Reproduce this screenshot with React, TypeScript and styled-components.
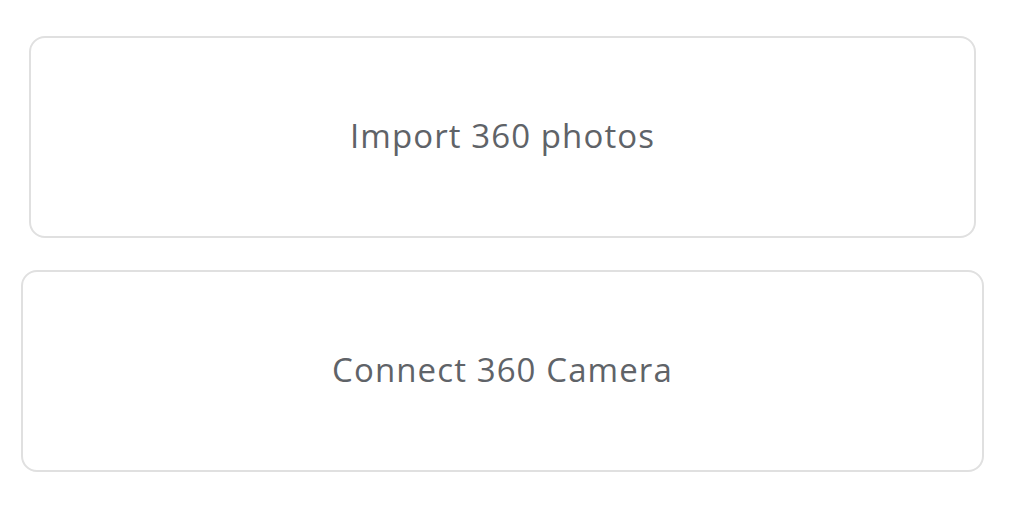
import React from "react";
import styled, { createGlobalStyle } from "styled-components";

const GlobalStyle = createGlobalStyle`
    html, body {
        margin: 0;
        padding: 0;
        background: #ffffff;
    }
`;

const Page = styled.div`
    width: 1024px;
    height: 512px;
    box-sizing: border-box;
    padding-top: 36px;
    display: flex;
    flex-direction: column;
    gap: 32px;
`;

const OptionCard = styled.button<{ $left: number; $width: number }>`
    margin-left: ${(p) => p.$left}px;
    width: ${(p) => p.$width}px;
    height: 202px;
    box-sizing: border-box;
    border: 2px solid #e0e0e0;
    border-radius: 16px;
    background: #ffffff;
    display: flex;
    align-items: center;
    justify-content: center;
    padding: 0 0 3px;
    cursor: pointer;

    font-family: "Open Sans", "Roboto", sans-serif;
    font-size: 33px;
    font-weight: 400;
    letter-spacing: 1.1px;
    color: #5f6368;
`;

function App() {
    return (
        <Page>
            <GlobalStyle />
            <OptionCard $left={29} $width={947}>
                Import 360 photos
            </OptionCard>
            <OptionCard $left={21} $width={963}>
                Connect 360 Camera
            </OptionCard>
        </Page>
    );
}

export default App;
